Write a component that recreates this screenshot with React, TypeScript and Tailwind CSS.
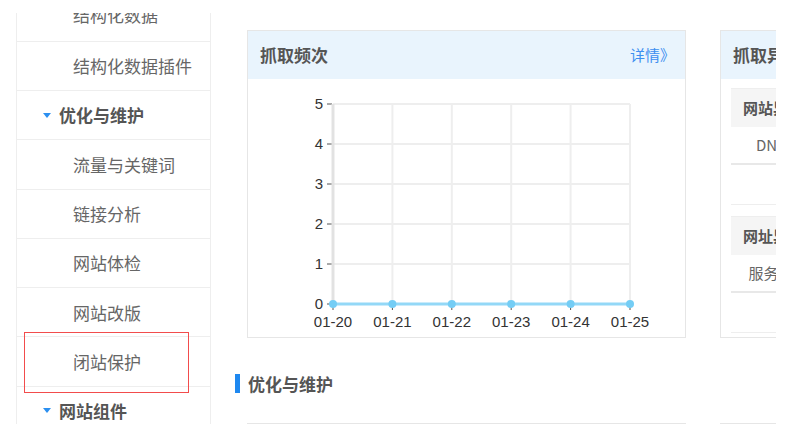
import React from 'react';

const font = { fontFamily: '"Noto Sans CJK SC", "Liberation Sans", sans-serif' };

type NavItem = { label: string; header?: boolean };

const navItems: NavItem[] = [
  { label: '结构化数据' },
  { label: '结构化数据插件' },
  { label: '优化与维护', header: true },
  { label: '流量与关键词' },
  { label: '链接分析' },
  { label: '网站体检' },
  { label: '网站改版' },
  { label: '闭站保护' },
  { label: '网站组件', header: true },
];

function Sidebar() {
  return (
    <div className="relative ml-4 mt-[13px] h-[411px] w-[195px] shrink-0 overflow-hidden border-x border-[#eeeeee]">
      <div className="-mt-[20.6px] flex flex-col">
        {navItems.map((item, i) => (
          <div
            key={item.label}
            className={`flex h-[49.3px] shrink-0 items-center border-b border-[#eeeeee] ${i === 0 ? 'pb-[4px]' : ''}`}
          >
            {item.header ? (
              <div className="flex items-center pl-[26px]">
                <span className="mr-[8px] h-0 w-0 border-x-[4px] border-t-[5px] border-x-transparent border-t-[#2b8ff0]" />
                <span className="text-[17px] font-bold text-[#555]">{item.label}</span>
              </div>
            ) : (
              <span className="pl-[56px] text-[17px] text-[#666]">{item.label}</span>
            )}
          </div>
        ))}
      </div>
    </div>
  );
}

const days = ['01-20', '01-21', '01-22', '01-23', '01-24', '01-25'];

function FrequencyChart() {
  const left = 85;
  const right = 382;
  const top = 25;
  const bottom = 225;
  const step = (right - left) / 5;
  const ys = [0, 1, 2, 3, 4, 5];
  return (
    <svg width="438" height="259" className="block" style={{ fontFamily: '"Liberation Sans", Arial, sans-serif' }}>
      {ys.map((v) => {
        const y = bottom - (v * (bottom - top)) / 5;
        return (
          <g key={v}>
            <line x1={left} x2={right} y1={y} y2={y} stroke="#eeeeee" strokeWidth="2" />
            <line x1={left - 6} x2={left - 1} y1={y} y2={y} stroke="#555" strokeWidth="1" />
            <text x={left - 10} y={y + 5} textAnchor="end" fontSize="15" fill="#333">
              {v}
            </text>
          </g>
        );
      })}
      {days.map((d, i) => {
        const x = left + i * step;
        return (
          <g key={d}>
            <line x1={x} x2={x} y1={top} y2={bottom} stroke={i === 0 ? '#e2e2e2' : '#eeeeee'} strokeWidth={i === 0 ? 3 : 2} />
            <line x1={x} x2={x} y1={bottom} y2={bottom + 6} stroke="#555" strokeWidth="1" />
            <text x={x} y={bottom + 23} textAnchor="middle" fontSize="15" fill="#333">
              {d}
            </text>
          </g>
        );
      })}
      <line x1={left} x2={right} y1={bottom} y2={bottom} stroke="#93d8f7" strokeWidth="3" />
      {days.map((d, i) => (
        <circle key={d} cx={left + i * step} cy={bottom} r="4" fill="#74cdf5" />
      ))}
    </svg>
  );
}

function CardHeader({ title, more }: { title: string; more?: boolean }) {
  return (
    <div className="flex h-[48px] items-center justify-between bg-[#e9f4fd] pl-[12px] pr-[10px]">
      <span className="text-[17px] font-bold text-[#555]">{title}</span>
      {more && <span className="text-[15px] text-[#3d8ff0]">详情》</span>}
    </div>
  );
}

function ErrorTable({ head, cell }: { head: string; cell: string }) {
  return (
    <div className="text-[15px]">
      <div className="flex h-[39px] items-center border-t border-[#eeeeee] bg-[#f5f5f5]">
        <span className="w-[114px] text-center font-bold text-[#555]">{head}</span>
      </div>
      <div className="flex h-[38px] items-center border-b-2 border-[#e8e8e8]">
        <span className="w-[110px] text-center text-[#666]">{cell}</span>
      </div>
      <div className="h-[40px] border-b border-[#eeeeee]" />
    </div>
  );
}

export default function App() {
  return (
    <div className="relative flex h-[438px] w-[802px] overflow-hidden bg-white" style={font}>
      <Sidebar />
      <div className="ml-[24px] w-[541px] shrink-0 overflow-hidden pt-[30px]">
        <div className="flex gap-[34px] pl-[12px]">
          <div className="h-[308px] w-[439px] shrink-0 border border-[#e6e6e6]">
            <CardHeader title="抓取频次" more />
            <FrequencyChart />
          </div>
          <div className="h-[308px] w-[439px] shrink-0 border border-[#e6e6e6]">
            <CardHeader title="抓取异常" more />
            <div className="flex flex-col gap-[11px] px-[10px] pt-[9px]">
              <ErrorTable head="网站异常类型" cell="DNS异常" />
              <ErrorTable head="网址异常类型" cell="服务器错误" />
            </div>
          </div>
        </div>
        <div className="mt-[36px] flex h-[19px] items-center">
          <span className="h-[19px] w-[5px] bg-[#1e88f0]" />
          <span className="ml-[8px] text-[17px] font-bold text-[#555]">优化与维护</span>
        </div>
        <div className="mt-[30px] flex gap-[34px] pl-[12px]">
          <div className="h-[40px] w-[439px] shrink-0 border-t border-[#e6e6e6]" />
          <div className="h-[40px] w-[439px] shrink-0 border-t border-[#e6e6e6]" />
        </div>
      </div>
      <div className="pointer-events-none absolute left-[24px] top-[332px] h-[61px] w-[165px] border border-[#f24c4c]" />
    </div>
  );
}
